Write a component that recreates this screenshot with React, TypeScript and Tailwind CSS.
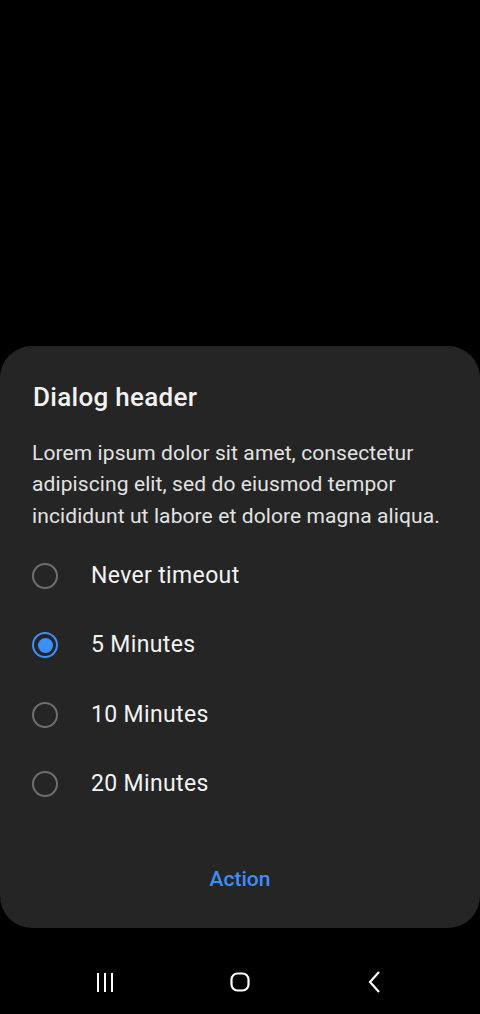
import { useState } from 'react'

const options = ['Never timeout', '5 Minutes', '10 Minutes', '20 Minutes']

function Radio({ checked }: { checked: boolean }) {
  return (
    <span
      className={`flex items-center justify-center w-[26px] h-[26px] rounded-full border-2 ${
        checked ? 'border-[#3e8ef7]' : 'border-[#6f6f6f]'
      }`}
    >
      {checked && <span className="block w-[15px] h-[15px] rounded-full bg-[#3e8ef7]" />}
    </span>
  )
}

export default function App() {
  const [selected, setSelected] = useState(1)

  return (
    <div className="flex flex-col h-[1014px] w-[480px] bg-black font-['Roboto',sans-serif]">
      <div className="flex-1" />

      <div className="rounded-[32px] bg-[#252525] pt-[35px] pb-[24px]">
        <h1 className="px-[33px] text-[26px] leading-[32px] tracking-[0.3px] font-medium text-[#f2f2f2]">
          Dialog header
        </h1>
        <p className="mt-[25px] px-[32px] text-[21px] leading-[31.5px] tracking-[0.1px] text-[#e2e2e2]">
          Lorem ipsum dolor sit amet, consectetur adipiscing elit, sed do eiusmod tempor incididunt ut labore et
          dolore magna aliqua.
        </p>

        <div className="mt-[9px] flex flex-col">
          {options.map((o, i) => (
            <button
              key={o}
              onClick={() => setSelected(i)}
              className="flex items-center h-[69.5px] pl-[32px] text-left"
            >
              <Radio checked={selected === i} />
              <span className="ml-[33px] text-[23px] tracking-[0.35px] text-[#f2f2f2]">{o}</span>
            </button>
          ))}
        </div>

        <div className="mt-[37px] flex justify-center">
          <button className="h-[48px] px-6 text-[21px] font-medium text-[#3e8ef7]">Action</button>
        </div>
      </div>

      {/* system nav bar */}
      <div className="h-[86px] flex justify-center items-start pt-[43px] gap-[111px]">
        <svg width="24" height="22" viewBox="0 0 24 22" fill="none" stroke="white" strokeWidth="2">
          <path d="M5 2v19M12 2v19M19 2v19" />
        </svg>
        <svg width="24" height="22" viewBox="0 0 24 22" fill="none" stroke="white" strokeWidth="2.2">
          <rect x="3.5" y="2.5" width="17" height="17" rx="6" />
        </svg>
        <svg width="24" height="22" viewBox="0 0 24 22" fill="none" stroke="white" strokeWidth="2.2">
          <path d="M16 1L7 11l9 10" />
        </svg>
      </div>
    </div>
  )
}
